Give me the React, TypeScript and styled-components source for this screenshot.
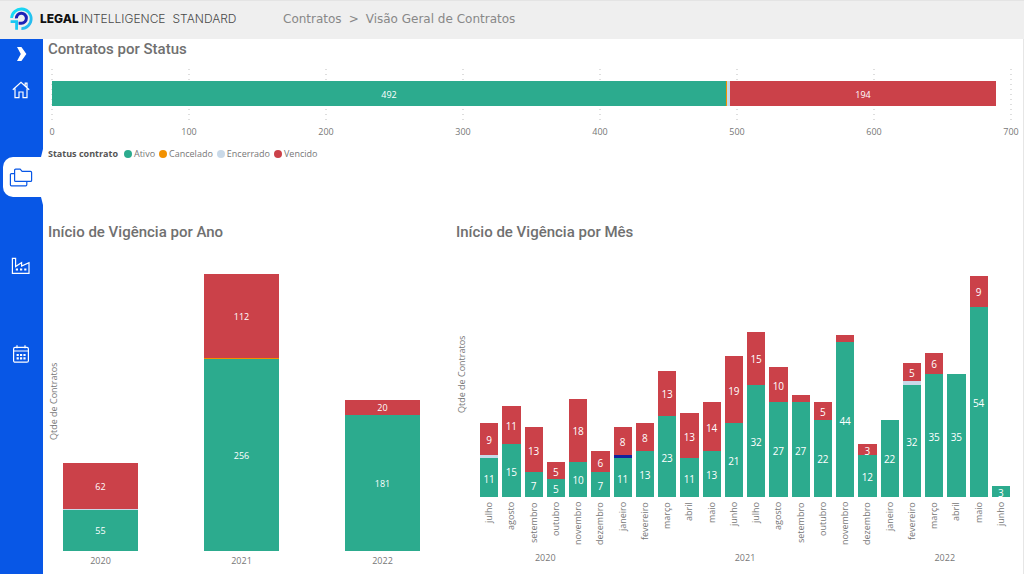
import React from "react";
import styled, { createGlobalStyle } from "styled-components";

const color = {
  blue: "#0857e6",
  header: "#efefef",
  title: "#707070",
  label: "#777777",
  ativo: "#2cab8e",
  cancelado: "#f29100",
  encerrado: "#c9d9e8",
  vencido: "#cb4149",
  outro: "#12239e",
};

type Status = "ativo" | "cancelado" | "encerrado" | "vencido" | "outro";
type Part = { status: Status; value: number; hideLabel?: boolean };
type Column = { name: string; parts: Part[] };

const a = (value: number): Part => ({ status: "ativo", value });
const v = (value: number): Part => ({ status: "vencido", value });
const thin = (status: Status, value = 1): Part => ({ status, value, hideLabel: true });

const statusTotals: Part[] = [a(492), thin("cancelado"), thin("encerrado", 2), v(194)];
const statusTicks = [0, 100, 200, 300, 400, 500, 600, 700];

const legend: { name: string; status: Status }[] = [
  { name: "Ativo", status: "ativo" },
  { name: "Cancelado", status: "cancelado" },
  { name: "Encerrado", status: "encerrado" },
  { name: "Vencido", status: "vencido" },
];

const years: Column[] = [
  { name: "2020", parts: [a(55), thin("encerrado"), v(62)] },
  { name: "2021", parts: [a(256), thin("cancelado"), v(112)] },
  { name: "2022", parts: [a(181), thin("encerrado"), v(20)] },
];

const months: Column[] = [
  { name: "julho", parts: [a(11), thin("encerrado"), v(9)] },
  { name: "agosto", parts: [a(15), v(11)] },
  { name: "setembro", parts: [a(7), v(13)] },
  { name: "outubro", parts: [a(5), v(5)] },
  { name: "novembro", parts: [a(10), v(18)] },
  { name: "dezembro", parts: [a(7), v(6)] },
  { name: "janeiro", parts: [a(11), thin("outro"), v(8)] },
  { name: "fevereiro", parts: [a(13), v(8)] },
  { name: "março", parts: [a(23), v(13)] },
  { name: "abril", parts: [a(11), v(13)] },
  { name: "maio", parts: [a(13), v(14)] },
  { name: "junho", parts: [a(21), v(19)] },
  { name: "julho", parts: [a(32), v(15)] },
  { name: "agosto", parts: [a(27), v(10)] },
  { name: "setembro", parts: [a(27), thin("vencido", 2)] },
  { name: "outubro", parts: [a(22), v(5)] },
  { name: "novembro", parts: [a(44), thin("vencido", 2)] },
  { name: "dezembro", parts: [a(12), v(3)] },
  { name: "janeiro", parts: [a(22)] },
  { name: "fevereiro", parts: [a(32), thin("encerrado"), v(5)] },
  { name: "março", parts: [a(35), v(6)] },
  { name: "abril", parts: [a(35)] },
  { name: "maio", parts: [a(54), v(9)] },
  { name: "junho", parts: [a(3)] },
];

const sum = (parts: Part[]) => parts.reduce((t, p) => t + p.value, 0);

const GlobalStyle = createGlobalStyle`
  * { box-sizing: border-box; }
  body {
    margin: 0;
    background: #ffffff;
    color: ${color.label};
    font: 9px/14px "Open Sans", "Noto Sans", sans-serif;
  }
`;

const Page = styled.div`
  min-height: 100vh;
  display: flex;
  flex-direction: column;
`;

const Header = styled.header`
  height: 39px;
  display: flex;
  align-items: center;
  padding: 0 10px 3px;
  background: ${color.header};
  border-top: 1px solid #e4e4e4;
`;

const Brand = styled.a`
  width: 273px;
  display: flex;
  align-items: center;
  gap: 6px;
  color: #4a4a4a;
  font: 300 12px/16px Inter, "Open Sans", sans-serif;
  text-decoration: none;
  white-space: nowrap;
`;

const BrandStrong = styled.strong`
  color: #111111;
  font-weight: 800;
  margin-right: 2px;
`;

const BrandTier = styled.span`
  margin-left: 7px;
`;

const Breadcrumb = styled.nav`
  display: flex;
  gap: 7px;
  color: #888888;
  font: 12px/16px "DejaVu Sans", sans-serif;
`;

const Crumb = styled.a`
  color: inherit;
  text-decoration: none;
`;

const Body = styled.div`
  flex: 1;
  display: flex;
`;

const Sidebar = styled.nav`
  flex: none;
  width: 43px;
  display: flex;
  flex-direction: column;
  background: ${color.blue};
`;

const ExpandButton = styled.button`
  height: 30px;
  padding: 0;
  border: 0;
  background: none;
  display: flex;
  align-items: center;
  justify-content: center;
`;

const NavList = styled.div`
  display: flex;
  flex-direction: column;
  gap: 48px;
`;

const NavLink = styled.a<{ $active?: boolean }>`
  position: relative;
  height: 40px;
  margin-left: ${(p) => (p.$active ? "3px" : "0")};
  padding-top: 2px;
  padding-right: ${(p) => (p.$active ? "5px" : "2px")};
  display: flex;
  align-items: center;
  justify-content: center;
  color: ${(p) => (p.$active ? color.blue : "#ffffff")};
  background: ${(p) => (p.$active ? "#ffffff" : "none")};
  border-radius: 10px 0 0 10px;

  &::before,
  &::after {
    content: "";
    display: ${(p) => (p.$active ? "block" : "none")};
    position: absolute;
    right: 0;
    width: 2px;
    height: 8px;
    background: #ffffff;
  }
  &::before {
    bottom: 100%;
    clip-path: polygon(100% 0, 100% 100%, 0 100%);
  }
  &::after {
    top: 100%;
    clip-path: polygon(0 0, 100% 0, 100% 100%);
  }
`;

const Main = styled.main`
  flex: 1;
  min-width: 0;
  padding: 0 12px 0 5px;
  border-right: 1px solid #e6e6e6;
`;

const Title = styled.h2`
  margin: 0;
  color: ${color.title};
  font: 500 15px/20px Roboto, sans-serif;
`;

const StatusPlot = styled.div`
  display: grid;
  height: 55px;
  margin: 10px 0 0 4px;
`;

const GridLines = styled.div`
  grid-area: 1 / 1;
  display: flex;
  justify-content: space-between;
`;

const GridLine = styled.i`
  width: 2px;
  margin: 0 -1px;
  background: repeating-linear-gradient(#dedede 0 1px, transparent 1px 5px);
`;

const StatusBar = styled.div`
  grid-area: 1 / 1;
  display: flex;
  height: 25px;
  margin-top: 12px;
`;

const Segment = styled.div<{ $status: Status }>`
  flex: 1 1 0;
  min-width: 0;
  min-height: 0;
  display: flex;
  align-items: center;
  justify-content: center;
  background: ${(p) => color[p.$status]};
  color: #ffffff;
`;

const SegmentValue = styled.span`
  padding-top: 2px;
`;

const TickRow = styled.div`
  display: flex;
  justify-content: space-between;
  margin-left: 4px;
  padding-top: 1px;
`;

const Tick = styled.span`
  width: 0;
  display: flex;
  justify-content: center;
`;

const Legend = styled.div`
  display: flex;
  gap: 4px;
  margin-top: 8px;
`;

const LegendTitle = styled.strong`
  margin-right: 2px;
  color: #555555;
`;

const LegendItem = styled.span<{ $status: Status }>`
  display: flex;
  align-items: center;
  gap: 2px;

  &::before {
    content: "";
    width: 8px;
    height: 8px;
    border-radius: 50%;
    background: ${(p) => color[p.$status]};
  }
`;

const Charts = styled.div`
  display: grid;
  grid-template-columns: 408fr 555fr;
  margin-top: 61px;
`;

const Chart = styled.section`
  display: grid;
  grid-template-columns: 15px 1fr;
  align-content: start;
`;

const ChartTitle = styled(Title)`
  grid-column: 1 / -1;
  margin-bottom: 9px;
`;

const vertical = `
  writing-mode: vertical-rl;
  transform: rotate(180deg);
`;

const AxisTitle = styled.span`
  ${vertical}
  width: 12px;
  line-height: 12px;
  text-align: center;
`;

const Plot = styled.div<{ $wide?: boolean }>`
  grid-column: 2;
  display: grid;
  grid-auto-flow: column;
  grid-auto-columns: minmax(0, 1fr);
  column-gap: ${(p) => (p.$wide ? "66px" : "4px")};
  margin-right: ${(p) => (p.$wide ? "36px" : "1px")};
  margin-left: ${(p) => (p.$wide ? "0" : "9px")};
`;

const Bars = styled(Plot)`
  height: ${(p) => (p.$wide ? "300px" : "246px")};
  align-items: end;
  font-size: ${(p) => (p.$wide ? "9px" : "10px")};
`;

const Stack = styled.div`
  display: flex;
  flex-direction: column-reverse;
`;

const YearNames = styled(Plot)`
  margin-top: 3px;
  text-align: center;
`;

const MonthNames = styled(Plot)`
  height: 44px;
  margin-top: 5px;
  justify-items: center;
`;

const MonthName = styled.span`
  ${vertical}
  text-align: right;
`;

const YearGroups = styled(Plot)`
  grid-auto-flow: row;
  grid-template-columns: 1fr 2fr 1fr;
  margin-top: 5px;
  text-align: center;
`;

const Segments = ({ parts }: { parts: Part[] }) => (
  <>
    {parts.map((p, i) => (
      <Segment key={i} $status={p.status} style={{ flexGrow: p.value }}>
        {p.hideLabel ? null : <SegmentValue>{p.value}</SegmentValue>}
      </Segment>
    ))}
  </>
);

const Columns = ({ data, max, wide }: { data: Column[]; max: number; wide?: boolean }) => (
  <Bars $wide={wide}>
    {data.map((c, i) => (
      <Stack key={i} style={{ height: `${(sum(c.parts) / max) * 100}%` }}>
        <Segments parts={c.parts} />
      </Stack>
    ))}
  </Bars>
);

const Logo = () => (
  <svg width="24" height="24" viewBox="0 0 24 24" fill="none" aria-hidden="true">
    <defs>
      <linearGradient id="ring" x1="0" y1="0" x2="1" y2="1">
        <stop offset="0" stopColor="#12e0f5" />
        <stop offset="1" stopColor="#2bb4ee" />
      </linearGradient>
    </defs>
    <path d="M1.600 11A9.800 9.800 0 1 1 11.400 21.600" stroke="url(#ring)" strokeWidth="2.800" />
    <path d="M6.400 11.400A5 5 0 1 1 11.400 16.200H8.600" stroke="#1c22b8" strokeWidth="3" />
    <path d="M.600 14.600H6.600V22.800" stroke="#19c8f2" strokeWidth="2.800" />
  </svg>
);

const HomeIcon = () => (
  <svg width="18" height="18" viewBox="0 0 18 18" fill="none" stroke="currentColor" strokeWidth="1.2" aria-hidden="true">
    <path d="M.8 8.8 9 1.4l8.2 7.4M3 7.4v9.2h4V11h4v5.6h4V7.4M13.2 4.8V2.2h1.8v4.2" />
  </svg>
);

const FoldersIcon = () => (
  <svg width="24" height="20" viewBox="0 0 24 20" fill="none" stroke="currentColor" strokeWidth="1.2" strokeLinejoin="round" aria-hidden="true">
    <path d="M5.6 2.2q0-1 1-1h4.6l1.9 2.2h8.5q1 0 1 1v8q0 1-1 1H6.6q-1 0-1-1z" />
    <path d="M5.6 5.6H2.4q-1 0-1 1v10.200q0 1 1 1h14.400q1 0 1-1v-3.400" />
  </svg>
);

const FactoryIcon = () => (
  <svg width="20" height="18" viewBox="0 0 20 18" fill="none" stroke="currentColor" strokeWidth="1.2" aria-hidden="true">
    <path d="M1.400 16.400V1.400h3.200v8.200l6-4v3.400l7.400-3.400v10.800z" />
    <path d="M4.800 12.500h2.200M9 12.500h2.200M13.200 12.500h2.200" strokeWidth="2" />
  </svg>
);

const CalendarIcon = () => (
  <svg width="18" height="20" viewBox="0 0 18 20" fill="none" stroke="currentColor" strokeWidth="1.2" aria-hidden="true">
    <rect x="1.600" y="3.400" width="14.800" height="14.800" rx="1.500" />
    <path d="M1.600 7h14.800M5 1.200v3M13 1.200v3" />
    <path d="M4.600 11h2.200M8 11h2.200M11.400 11h2.200M4.600 14.300h2.200M8 14.300h2.200M11.400 14.300h2.200" strokeWidth="2.200" />
  </svg>
);

export default function App() {
  return (
    <Page>
      <GlobalStyle />
      <Header>
        <Brand href="#">
          <Logo />
          <span>
            <BrandStrong>LEGAL</BrandStrong>INTELLIGENCE<BrandTier>STANDARD</BrandTier>
          </span>
        </Brand>
        <Breadcrumb aria-label="Navegação">
          <Crumb href="#contratos">Contratos</Crumb>
          <span>&gt;</span>
          <Crumb href="#visao-geral">Visão Geral de Contratos</Crumb>
        </Breadcrumb>
      </Header>
      <Body>
        <Sidebar aria-label="Menu">
          <ExpandButton aria-label="Expandir menu">
            <svg width="10" height="14" viewBox="0 0 10 14" fill="#ffffff" aria-hidden="true">
              <path d="M0 0h4.400L9.400 7l-5 7H0l3.800-7z" />
            </svg>
          </ExpandButton>
          <NavList>
            <NavLink href="#inicio" aria-label="Início"><HomeIcon /></NavLink>
            <NavLink href="#contratos" aria-label="Contratos" $active><FoldersIcon /></NavLink>
            <NavLink href="#empresas" aria-label="Empresas"><FactoryIcon /></NavLink>
            <NavLink href="#calendario" aria-label="Calendário"><CalendarIcon /></NavLink>
          </NavList>
        </Sidebar>
        <Main>
          <section>
            <Title>Contratos por Status</Title>
            <StatusPlot>
              <GridLines>
                {statusTicks.map((t) => <GridLine key={t} />)}
              </GridLines>
              <StatusBar style={{ width: `${(sum(statusTotals) / 700) * 100}%` }}>
                <Segments parts={statusTotals} />
              </StatusBar>
            </StatusPlot>
            <TickRow>
              {statusTicks.map((t) => <Tick key={t}>{t}</Tick>)}
            </TickRow>
            <Legend>
              <LegendTitle>Status contrato</LegendTitle>
              {legend.map((l) => (
                <LegendItem key={l.name} $status={l.status}>{l.name}</LegendItem>
              ))}
            </Legend>
          </section>
          <Charts>
            <Chart>
              <ChartTitle>Início de Vigência por Ano</ChartTitle>
              <AxisTitle>Qtde de Contratos</AxisTitle>
              <Columns data={years} max={400} wide />
              <YearNames $wide>
                {years.map((y) => <span key={y.name}>{y.name}</span>)}
              </YearNames>
            </Chart>
            <Chart>
              <ChartTitle>Início de Vigência por Mês</ChartTitle>
              <AxisTitle>Qtde de Contratos</AxisTitle>
              <Columns data={months} max={70} />
              <MonthNames>
                {months.map((m, i) => <MonthName key={i}>{m.name}</MonthName>)}
              </MonthNames>
              <YearGroups>
                {years.map((y) => <span key={y.name}>{y.name}</span>)}
              </YearGroups>
            </Chart>
          </Charts>
        </Main>
      </Body>
    </Page>
  );
}
